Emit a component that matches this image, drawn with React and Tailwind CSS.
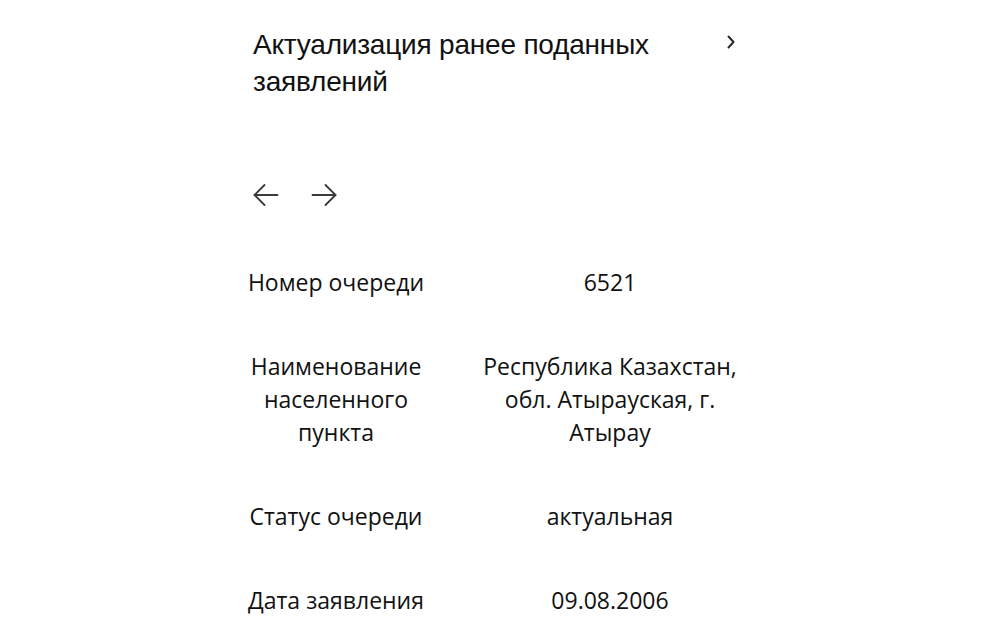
import React from 'react';

const rows = [
    { label: 'Номер очереди', value: '6521' },
    { label: 'Наименование населенного пункта', value: 'Республика Казахстан, обл. Атырауская, г. Атырау' },
    { label: 'Статус очереди', value: 'актуальная' },
    { label: 'Дата заявления', value: '09.08.2006' },
];

function Arrow({ flip }) {
    return (
        <svg width="26" height="24" viewBox="0 0 26 24" fill="none" stroke="#3a3a3a" strokeWidth="1.8" strokeLinecap="round" strokeLinejoin="round" className={flip ? 'rotate-180' : ''}>
            <path d="M1.5 12H24.5" />
            <path d="M11.5 2L1.5 12L11.5 22" />
        </svg>
    );
}

export default function App() {
    return (
        <div className="w-[1000px] h-[634px] overflow-hidden bg-white text-[#111]">
            <div className="ml-[253px] w-[490px]">
                {/* previous item, scrolled off the top */}
                <div className="h-[26px] overflow-hidden">
                    <div className="-mt-[15px] pl-[69px] text-[16px] leading-[20px] text-[#b0b0b0] font-['Liberation_Sans',Arial,sans-serif]">
                        заявления
                    </div>
                </div>

                <div className="flex items-start justify-between">
                    <h1 className="w-[430px] text-[28px] leading-[37px] font-['Liberation_Sans',Arial,sans-serif] tracking-[-0.2px]">
                        Актуализация ранее поданных заявлений
                    </h1>
                    <svg width="12" height="16" viewBox="0 0 12 16" fill="none" stroke="#2a2a2a" strokeWidth="2" strokeLinecap="round" strokeLinejoin="round" className="mt-[8px] mr-[6px]">
                        <path d="M3.5 2.5L8.5 8L3.5 13.5" />
                    </svg>
                </div>

                <div className="mt-[83px] flex items-center gap-[32px]">
                    <Arrow />
                    <Arrow flip />
                </div>
            </div>

            <div className="mt-[33px] ml-[236px] grid grid-cols-[200px_280px] gap-x-[34px] font-['Open_Sans','Noto_Sans',sans-serif] text-[23px] leading-[33px] text-center">
                {rows.map((r) => (
                    <React.Fragment key={r.label}>
                        <div className="py-[25.5px]">{r.label}</div>
                        <div className="py-[25.5px]">{r.value}</div>
                    </React.Fragment>
                ))}
            </div>
        </div>
    );
}
